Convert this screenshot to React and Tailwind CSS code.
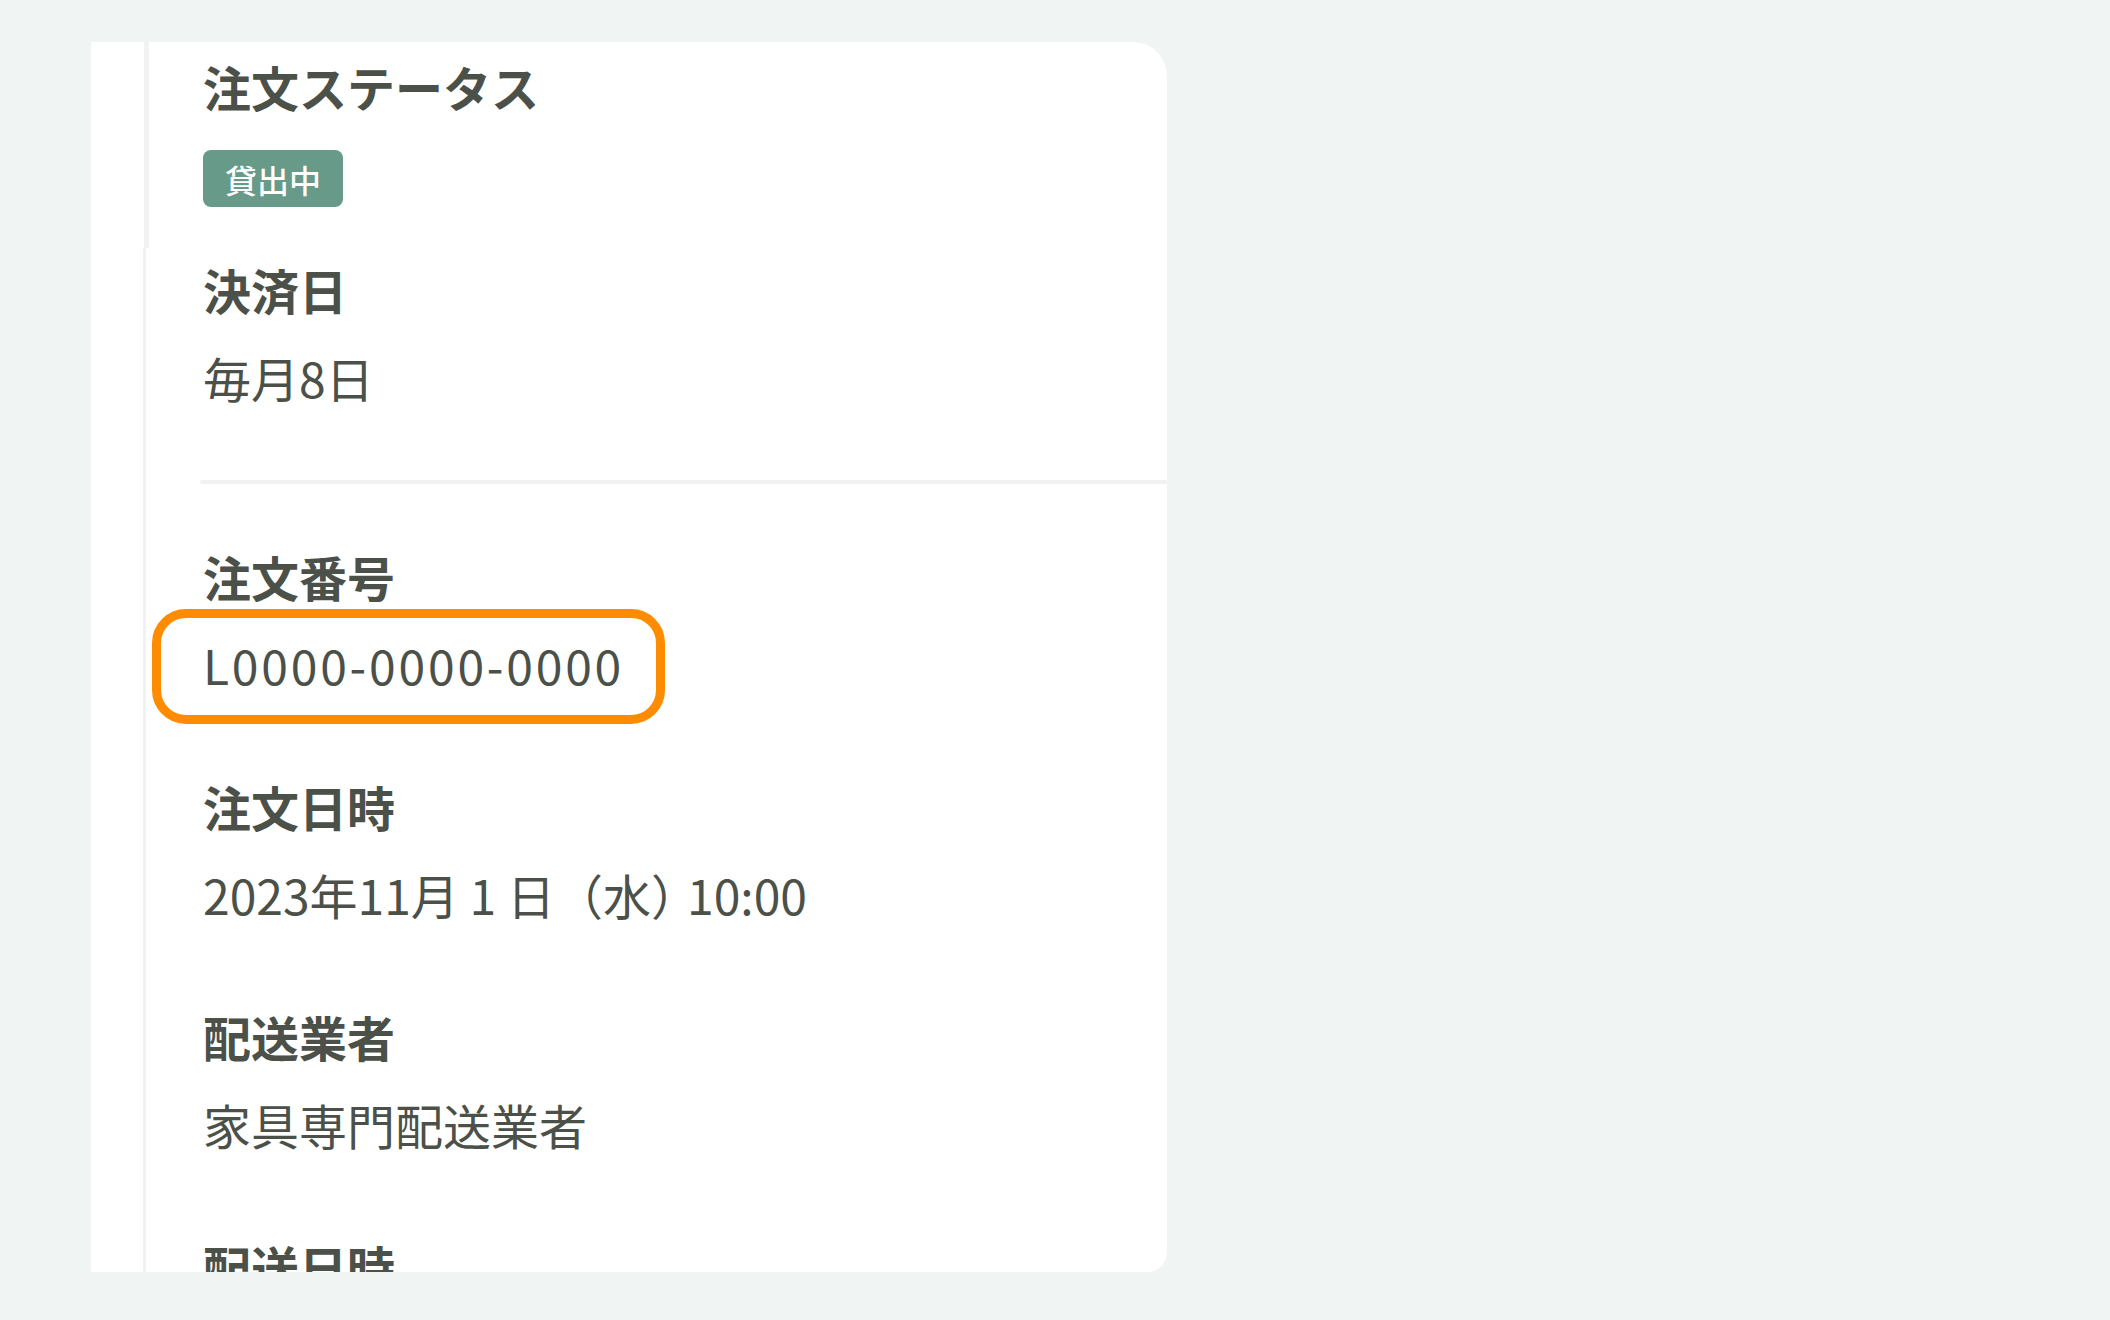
const FONT = "font-['Noto_Sans_CJK_JP','Noto_Sans',sans-serif]";

const details = [
  { label: "注文番号", value: "L0000-0000-0000", marked: true },
  {
    label: "注文日時",
    value: (
      <>
        2023年11月 1 日（水<span className="tracking-[-12px]">）</span>10:00
      </>
    ),
  },
  { label: "配送業者", value: "家具専門配送業者" },
  { label: "配送日時" },
];

function Label({ children }) {
  return <h3 className="h-[64px] text-[48px] leading-[64px] font-bold text-[#4b5049]">{children}</h3>;
}

function Value({ children, className = "" }) {
  return (
    <p className={`mt-[24px] h-[64px] text-[48px] leading-[64px] text-[#4b5049] whitespace-nowrap ${className}`}>
      {children}
    </p>
  );
}

export default function App() {
  return (
    <div className={`min-h-screen bg-[#f0f4f3] pt-[42px] pl-[91px] ${FONT}`}>
      <div className="w-[1076px] h-[1230px] bg-white rounded-tr-[34px] rounded-br-[20px] overflow-hidden">
        {/* status block */}
        <section className="ml-[53px] h-[206px] border-l-[5px] border-[#f1f2f2] pl-[54px] pt-[12px]">
          <Label>注文ステータス</Label>
          <span className="mt-[32px] flex w-[140px] h-[57px] items-center justify-center rounded-[8px] bg-[#679a89] text-[32px] font-medium text-white">
            貸出中
          </span>
        </section>

        <section className="ml-[52px] h-[1024px] border-l-[3px] border-[#f1f2f2] pl-[57px] pt-[9px]">
          <Label>決済日</Label>
          <Value>毎月8日</Value>

          <div className="mt-[71px] -ml-[3px] h-[4px] rounded-full bg-[#f1f1f1]" />

          <div className="mt-[60px] flex flex-col gap-[78px]">
            {details.map((d) => (
              <div key={d.label}>
                <Label>{d.label}</Label>
                {d.marked ? (
                  <div className="relative">
                    <Value className="tracking-[2.8px]">{d.value}</Value>
                    {/* highlight frame around the order number */}
                    <div className="pointer-events-none absolute left-[-51px] top-[-23px] w-[513px] h-[115px] rounded-[34px] border-[9px] border-[#ff8c00]" />
                  </div>
                ) : (
                  d.value && <Value>{d.value}</Value>
                )}
              </div>
            ))}
          </div>
        </section>
      </div>
    </div>
  );
}
